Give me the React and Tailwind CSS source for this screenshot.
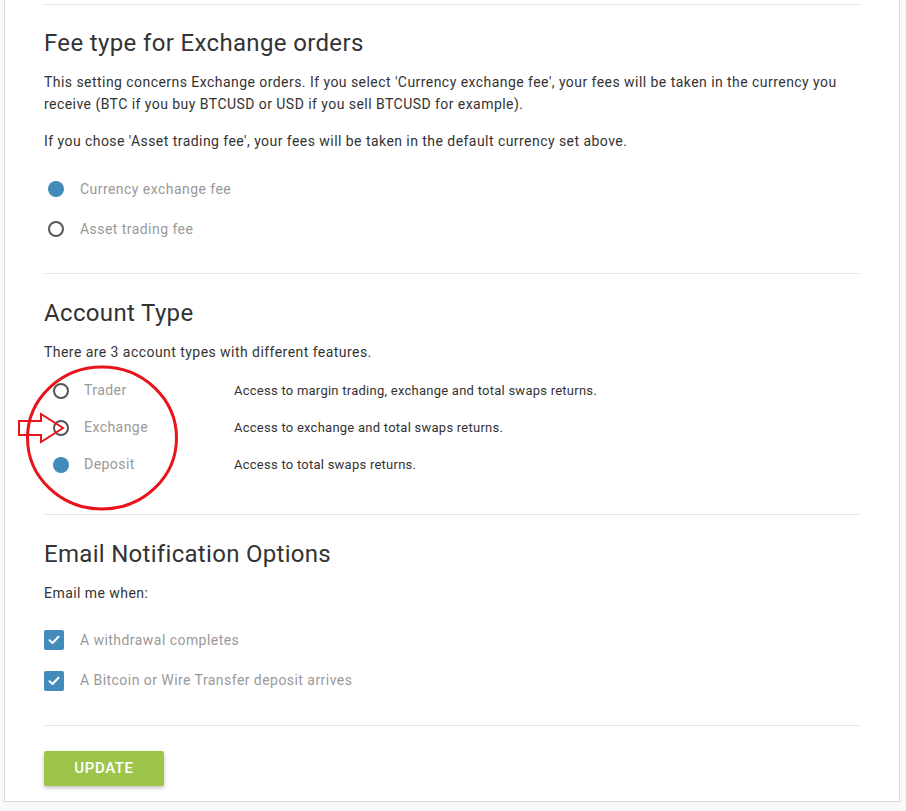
import React, { useState } from "react";

const Radio = ({ checked }) =>
  checked ? (
    <span className="block w-[16px] h-[16px] rounded-full bg-[#428bba]" />
  ) : (
    <span className="block w-[16px] h-[16px] rounded-full border-2 border-[#555]" />
  );

const Checkbox = () => (
  <span className="flex items-center justify-center w-[20px] h-[20px] rounded-[2px] bg-[#428bba]">
    <svg width="12" height="10" viewBox="0 0 12 10" fill="none">
      <path d="M1.5 5.2 L4.5 8 L10.5 1.8" stroke="white" strokeWidth="2" strokeLinecap="round" strokeLinejoin="round" />
    </svg>
  </span>
);

const accountTypes = [
  { name: "Trader", desc: "Access to margin trading, exchange and total swaps returns.", checked: false },
  { name: "Exchange", desc: "Access to exchange and total swaps returns.", checked: false },
  { name: "Deposit", desc: "Access to total swaps returns.", checked: true },
];

export default function App() {
  const [fee, setFee] = useState("currency");

  return (
    <div className="min-h-[811px] bg-[#f8f8f8] font-['Roboto',sans-serif] text-[14px] tracking-[0.45px] text-[#333]">
      <div className="relative ml-[4px] w-[896px] border border-t-0 border-[#d9d9d9] bg-white px-[39px] pt-[4px] pb-[15px]">
        <div className="h-px bg-[#e6e6e6]" />

        {/* Fee type */}
        <h2 className="mt-[22px] text-[24px] leading-[32px] tracking-[0.35px] text-[#333]">Fee type for Exchange orders</h2>
        <p className="mt-[12px] leading-[22px]">
          This setting concerns Exchange orders. If you select 'Currency exchange fee', your fees will be taken in the currency you receive (BTC if you buy BTCUSD or USD if you sell BTCUSD for example).
        </p>
        <p className="mt-[15px] leading-[22px]">
          If you chose 'Asset trading fee', your fees will be taken in the default currency set above.
        </p>
        <div className="mt-[17px]">
          <div className="flex h-[40px] items-center gap-[16px] pl-[4px] cursor-pointer" onClick={() => setFee("currency")}>
            <Radio checked={fee === "currency"} />
            <span className="text-[#999]">Currency exchange fee</span>
          </div>
          <div className="flex h-[40px] items-center gap-[16px] pl-[4px] cursor-pointer" onClick={() => setFee("asset")}>
            <Radio checked={fee === "asset"} />
            <span className="text-[#999]">Asset trading fee</span>
          </div>
        </div>

        <div className="mt-[24px] h-px bg-[#e6e6e6]" />

        {/* Account type */}
        <h2 className="mt-[23px] text-[24px] leading-[32px] tracking-[0.35px]">Account Type</h2>
        <p className="mt-[12px] leading-[22px]">There are 3 account types with different features.</p>
        <div className="mt-[9px]">
          {accountTypes.map((t) => (
            <div key={t.name} className="flex h-[37px] items-center">
              <div className="flex w-[190px] items-center gap-[15px] pl-[9px]">
                <Radio checked={t.checked} />
                <span className="text-[#999]">{t.name}</span>
              </div>
              <span className="text-[13px] tracking-[0.25px]">{t.desc}</span>
            </div>
          ))}
        </div>

        <div className="mt-[31px] h-px bg-[#e6e6e6]" />

        {/* Email */}
        <h2 className="mt-[23px] text-[24px] leading-[32px] tracking-[0.3px]">Email Notification Options</h2>
        <p className="mt-[12px] leading-[22px]">Email me when:</p>
        <div className="mt-[16px]">
          <div className="flex h-[40px] items-center gap-[16px]">
            <Checkbox />
            <span className="text-[#999]">A withdrawal completes</span>
          </div>
          <div className="flex h-[41px] items-center gap-[16px]">
            <Checkbox />
            <span className="text-[#999]">A Bitcoin or Wire Transfer deposit arrives</span>
          </div>
        </div>

        <div className="mt-[24px] h-px bg-[#e6e6e6]" />

        <button className="mt-[25px] h-[35px] w-[120px] rounded-[2px] bg-[#9dc44b] text-[15px] font-medium uppercase tracking-[0.6px] text-white shadow-[0_2px_4px_rgba(0,0,0,0.25)]">
          Update
        </button>

        {/* Annotation overlay */}
        <svg className="pointer-events-none absolute left-[-4px] top-[360px]" width="200" height="155" viewBox="0 360 200 155">
          <ellipse cx="101" cy="438" rx="74.5" ry="71" fill="none" stroke="#e8141c" strokeWidth="3" />
          <path d="M18 421 L40 421 L40 414 L62 428 L40 442 L40 435 L18 435 Z" fill="none" stroke="#e8141c" strokeWidth="2" />
        </svg>
      </div>
    </div>
  );
}
